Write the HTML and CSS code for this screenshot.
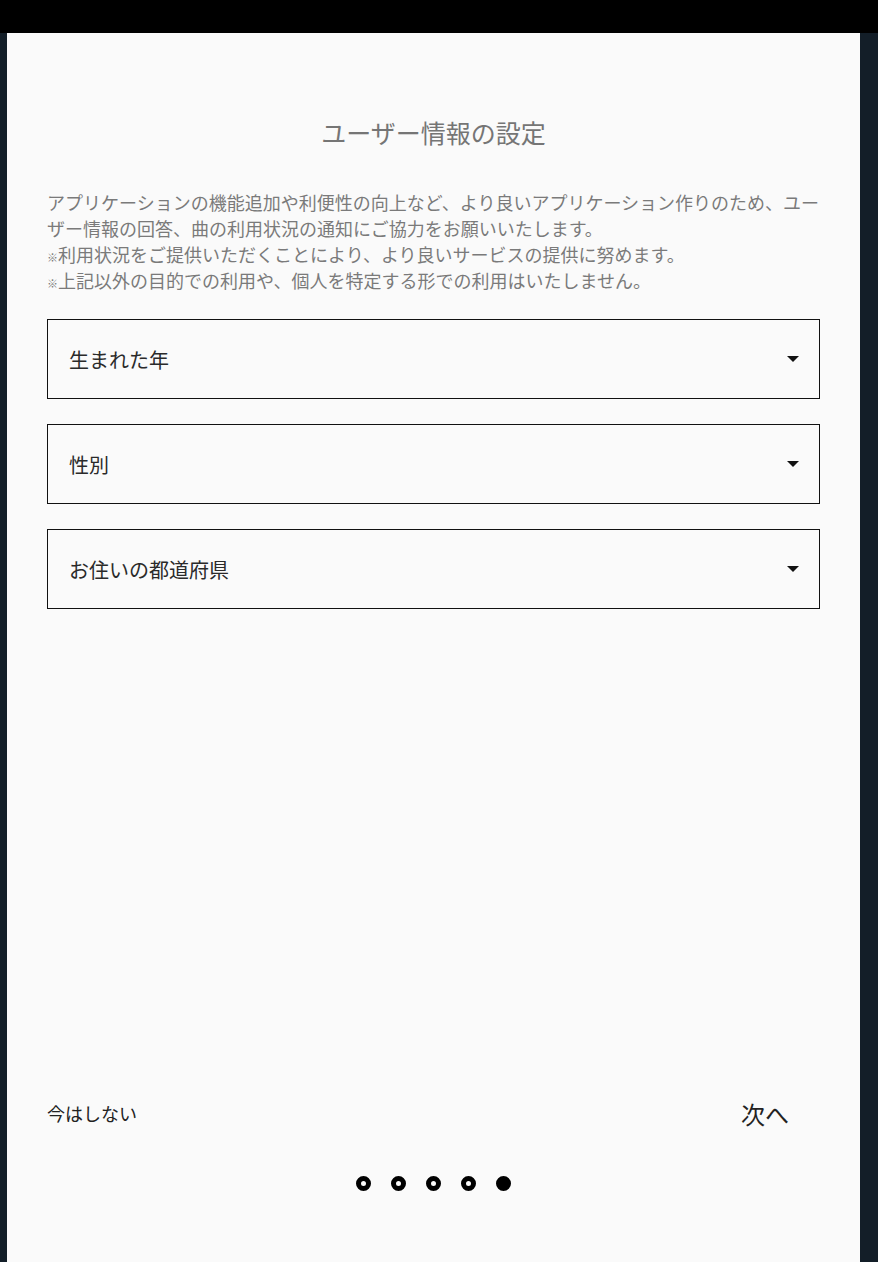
FILE: index.html
```html
<!DOCTYPE html>
<html lang="ja">
<head>
<meta charset="utf-8">
<link rel="stylesheet" href="styles.css">
</head>
<body>
<div class="topbar"></div>
<div class="stage">
  <div class="side side-left"></div>
  <main class="panel">
    <h1 class="title">ユーザー情報の設定</h1>
    <div class="desc">
      <div class="line">アプリケーションの機能追加や利便性の向上など、より良いアプリケーション作りのため、ユー</div>
      <div class="line">ザー情報の回答、曲の利用状況の通知にご協力をお願いいたします。</div>
      <div class="line"><span class="note">※</span>利用状況をご提供いただくことにより、より良いサービスの提供に努めます。</div>
      <div class="line"><span class="note">※</span>上記以外の目的での利用や、個人を特定する形での利用はいたしません。</div>
    </div>
    <div class="fields">
      <div class="select"><span>生まれた年</span><span class="caret"></span></div>
      <div class="select"><span>性別</span><span class="caret"></span></div>
      <div class="select"><span>お住いの都道府県</span><span class="caret"></span></div>
    </div>
    <div class="footer">
      <div class="actions">
        <span class="skip">今はしない</span>
        <span class="next">次へ</span>
      </div>
      <div class="dots">
        <span class="dot"></span>
        <span class="dot"></span>
        <span class="dot"></span>
        <span class="dot"></span>
        <span class="dot active"></span>
      </div>
    </div>
  </main>
  <div class="side side-right"></div>
</div>
</body>
</html>
```

FILE: styles.css
```css
html, body {
  margin: 0;
  padding: 0;
  background: #131e28;
  width: 878px;
  height: 1262px;
  overflow: hidden;
  font-family: "Noto Sans CJK JP", "Noto Sans", sans-serif;
}
.topbar {
  height: 33px;
  background: #000;
}
.stage {
  display: flex;
  height: 1229px;
}
.side-left {
  width: 7px;
  background: #131e28;
}
.side-right {
  flex: 1;
  background: #131e28;
}
.panel {
  width: 853px;
  background: #fafafa;
  display: flex;
  flex-direction: column;
  padding: 82px 40px 0 40px;
  box-sizing: border-box;
}
.title {
  margin: 0;
  font-weight: 400;
  font-size: 25px;
  line-height: 34px;
  height: 34px;
  text-align: center;
  color: #757575;
}
.desc {
  margin-top: 40px;
  display: flex;
  flex-direction: column;
  font-size: 18px;
  color: #7a7a7a;
  white-space: nowrap;
}
.line {
  height: 26px;
  line-height: 26px;
  overflow: visible;
}
.note {
  font-size: 11px;
}
.fields {
  margin-top: 26px;
  display: flex;
  flex-direction: column;
  gap: 25px;
}
.select {
  height: 80px;
  box-sizing: border-box;
  border: 1px solid #111;
  display: flex;
  align-items: center;
  justify-content: space-between;
  padding: 0 20px 0 21px;
  font-size: 20px;
  color: #2a2a2a;
}
.caret {
  width: 0;
  height: 0;
  border-left: 6px solid transparent;
  border-right: 6px solid transparent;
  border-top: 6px solid #111;
}
.footer {
  margin-top: auto;
  padding-bottom: 71px;
}
.actions {
  display: flex;
  justify-content: space-between;
  align-items: center;
  height: 40px;
}
.skip {
  font-size: 18px;
  color: #222;
}
.next {
  font-size: 24px;
  color: #222;
  padding-right: 31px;
}
.dots {
  margin-top: 43px;
  display: flex;
  justify-content: center;
  gap: 20px;
}
.dot {
  width: 15px;
  height: 15px;
  box-sizing: border-box;
  border: 5px solid #000;
  border-radius: 50%;
  background: #fafafa;
}
.dot.active {
  background: #000;
}
```
